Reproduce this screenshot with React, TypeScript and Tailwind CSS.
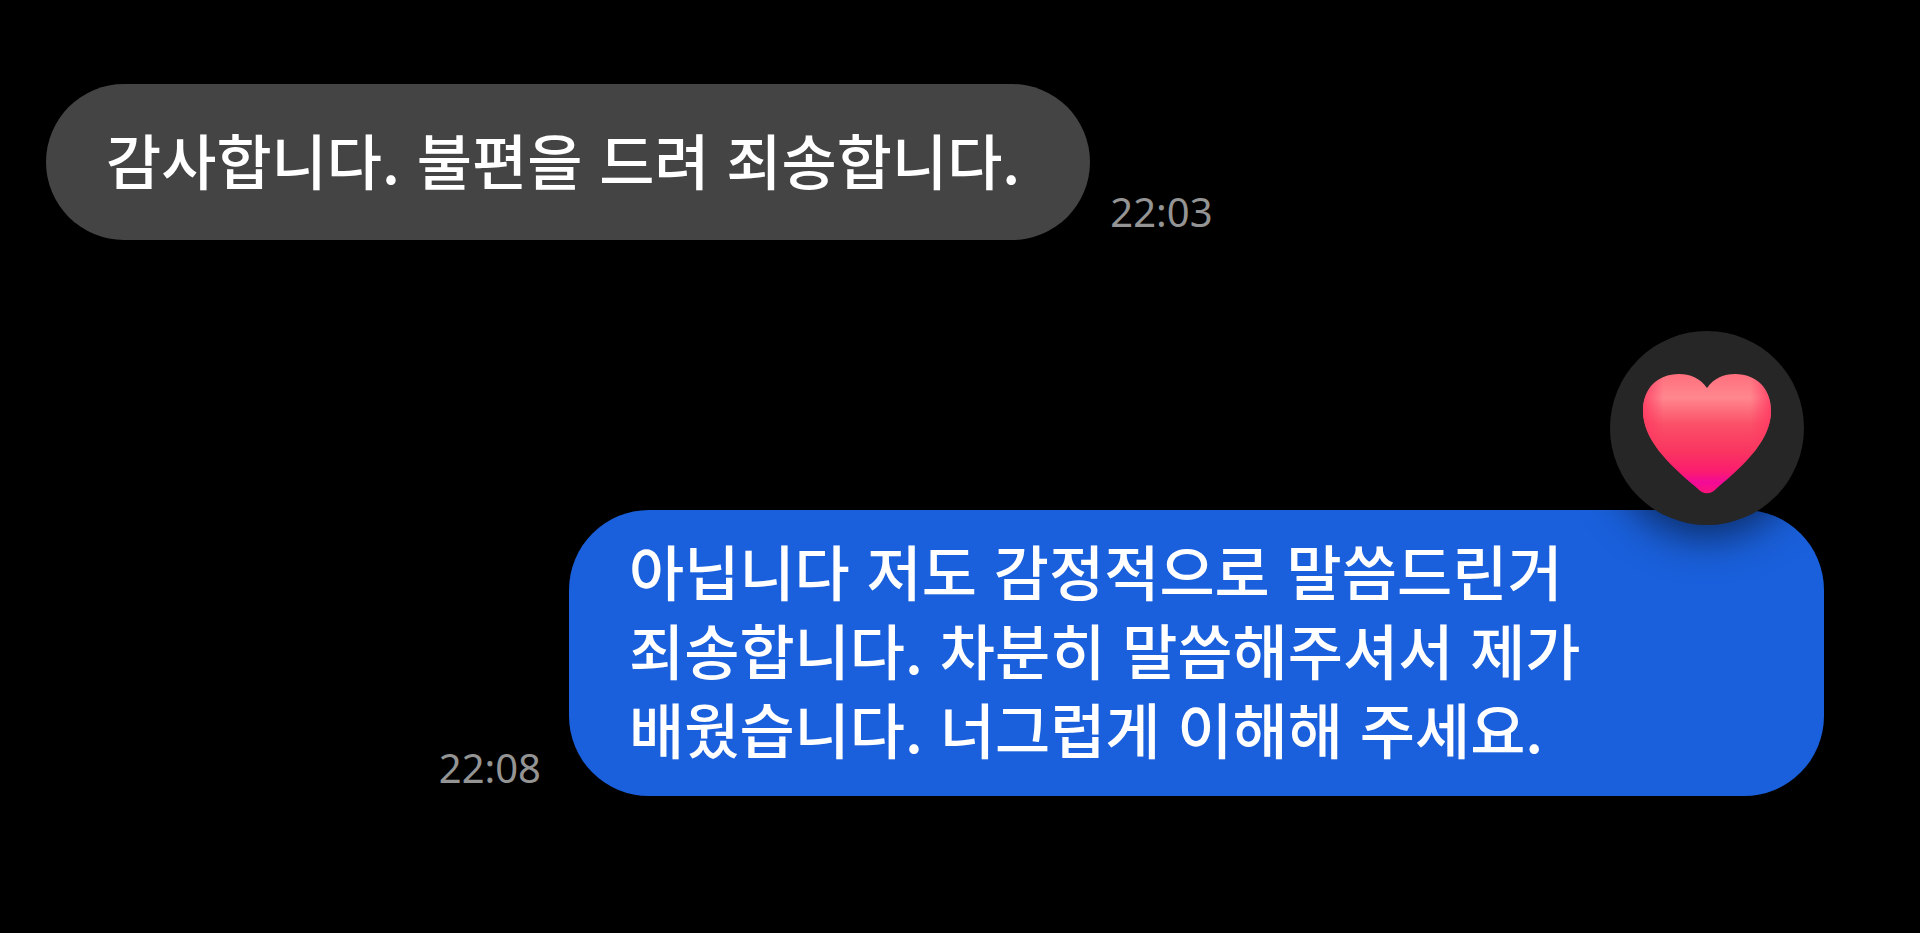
interface Message {
  id: number;
  side: 'received' | 'sent';
  text: string;
  time: string;
  reaction?: 'heart';
}

const MESSAGES: Message[] = [
  {
    id: 1,
    side: 'received',
    text: '감사합니다. 불편을 드려 죄송합니다.',
    time: '22:03'
  },
  {
    id: 2,
    side: 'sent',
    text: '아닙니다 저도 감정적으로 말씀드린거 죄송합니다. 차분히 말씀해주셔서 제가 배웠습니다. 너그럽게 이해해 주세요.',
    time: '22:08',
    reaction: 'heart'
  }
];

const HEART_PATH =
  'M64 15C57 5 47 1 36 1C14 1 0 16 0 38C0 66 24 90 54 115C60 122 68 122 74 115C104 90 128 66 128 38C128 16 114 1 92 1C81 1 71 5 64 15Z';

function HeartIcon() {
  return (
    <svg viewBox="0 0 128 122" className="w-32" aria-hidden="true">
      <defs>
        <linearGradient id="heart-fill" x1="0" y1="0" x2="0" y2="1">
          <stop offset="0" stopColor="#ff6f7e" />
          <stop offset="0.2" stopColor="#ff878e" />
          <stop offset="0.42" stopColor="#fb5068" />
          <stop offset="0.65" stopColor="#f93560" />
          <stop offset="0.82" stopColor="#fb1c70" />
          <stop offset="0.91" stopColor="#f20a98" />
          <stop offset="1" stopColor="#fb1478" />
        </linearGradient>
        <linearGradient id="heart-edge" x1="0" y1="0" x2="1" y2="0">
          <stop offset="0" stopColor="#ff3560" stopOpacity="0.8" />
          <stop offset="0.16" stopColor="#ff3560" stopOpacity="0" />
          <stop offset="0.84" stopColor="#ff3560" stopOpacity="0" />
          <stop offset="1" stopColor="#ff3560" stopOpacity="0.8" />
        </linearGradient>
      </defs>
      <path d={HEART_PATH} fill="url(#heart-fill)" />
      <path d={HEART_PATH} fill="url(#heart-edge)" />
    </svg>
  );
}

function ReactionBadge() {
  return (
    <button
      type="button"
      aria-label="하트"
      className="absolute right-5 bottom-full mb-[-15px] flex size-[194px] items-center justify-center rounded-full bg-[#262626] pt-3 shadow-[0_12px_40px_rgba(0,0,0,0.55)]"
    >
      <HeartIcon />
    </button>
  );
}

function MessageRow({ message }: { message: Message }) {
  const isSent = message.side === 'sent';

  return (
    <li className={`flex items-end ${isSent ? 'flex-row-reverse gap-7' : 'gap-5'}`}>
      <div
        className={`relative rounded-[80px] pl-[60px] text-[60px] leading-[79px] font-medium break-keep text-white ${
          isSent ? 'max-w-[1255px] bg-[#1a60dc] pt-5 pr-[60px] pb-[29px]' : 'bg-[#444444] pt-[35px] pr-[70px] pb-[42px]'
        }`}
      >
        <p>{message.text}</p>
        {message.reaction === 'heart' && <ReactionBadge />}
      </div>
      <time className="pb-2 font-['Noto_Sans','Open_Sans',sans-serif] text-[40px] leading-10 text-[#949494]">
        {message.time}
      </time>
    </li>
  );
}

export default function App() {
  return (
    <main lang="ko" className="min-h-screen bg-black pt-[84px] pr-24 pl-[46px] font-['Noto_Sans_CJK_KR',sans-serif]">
      <ul className="flex flex-col gap-[270px]">
        {MESSAGES.map(message => (
          <MessageRow key={message.id} message={message} />
        ))}
      </ul>
    </main>
  );
}
